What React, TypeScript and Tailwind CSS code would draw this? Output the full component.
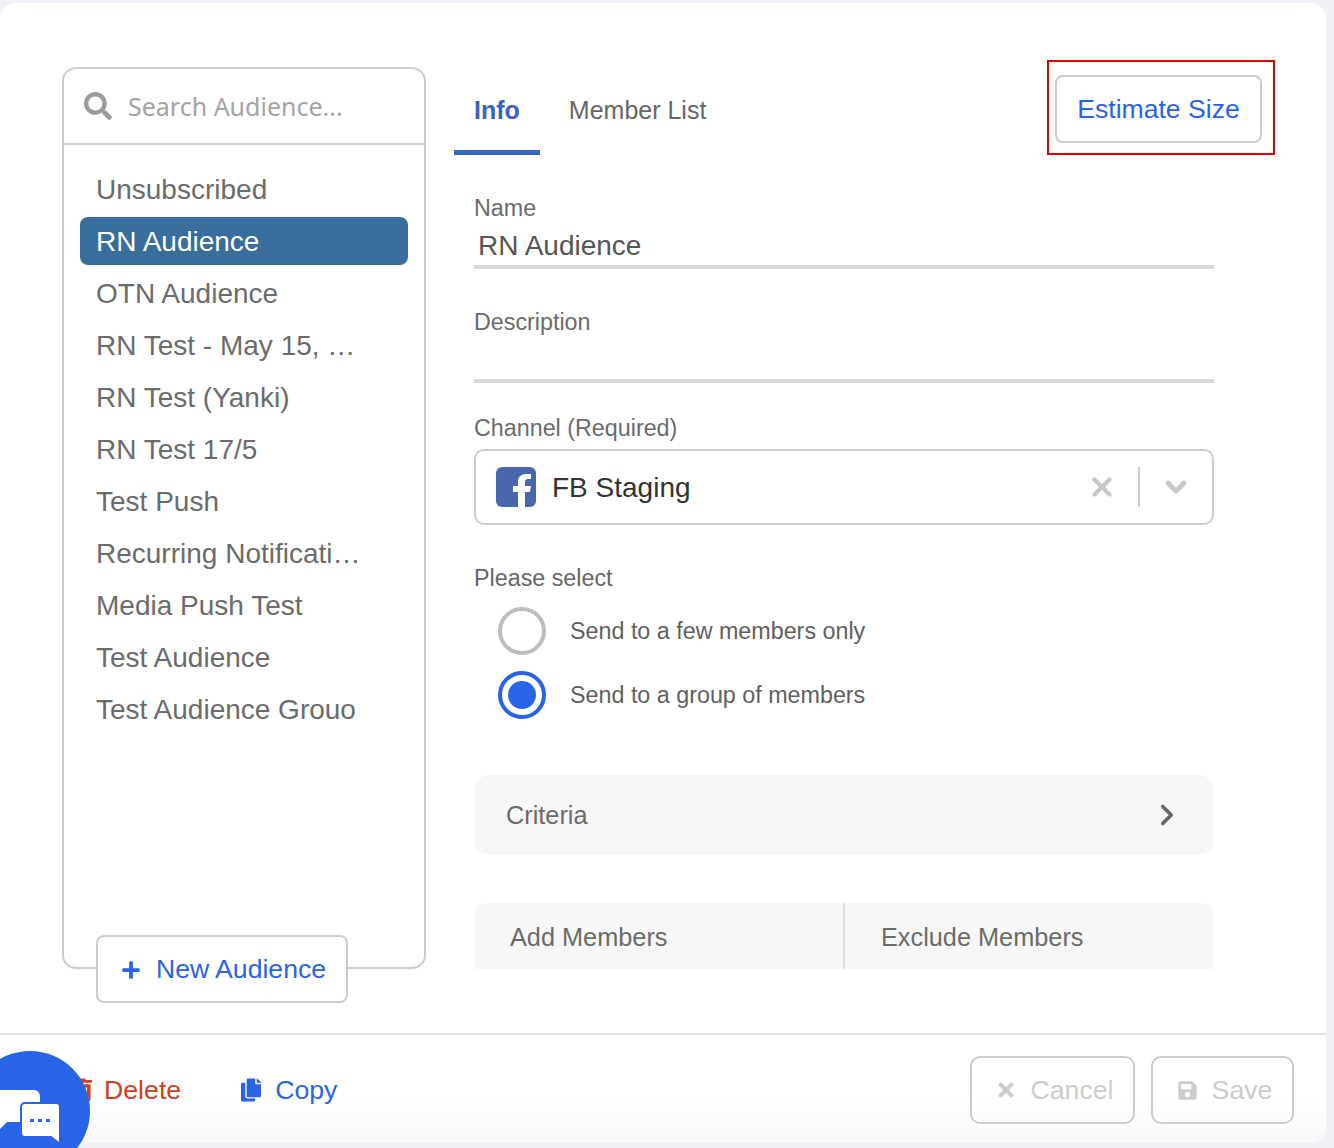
import { FaCopy, FaPlus, FaSave, FaSearch, FaTimes, FaTrashAlt } from "react-icons/fa";
import { ChevronDown, ChevronRight, X } from "lucide-react";

const audiences = [
  "Unsubscribed",
  "RN Audience",
  "OTN Audience",
  "RN Test - May 15, 2019",
  "RN Test (Yanki)",
  "RN Test 17/5",
  "Test Push",
  "Recurring Notification Test",
  "Media Push Test",
  "Test Audience",
  "Test Audience Grouo",
];

const Field = ({ label, value }: { label: string; value?: string }) => (
  <div>
    <div className="h-[30px] text-[23.3px] leading-[30px] text-[#6b6b6b]">{label}</div>
    <div className="h-[46px] border-b-[4px] border-[#d8d8d8] pl-[4px] pt-[5px] text-[28px] leading-[36px] text-[#555]">{value}</div>
  </div>
);

const Radio = ({ checked, label }: { checked?: boolean; label: string }) => (
  <div className="flex h-[48px] items-center gap-[24px] pl-[24px]">
    <div
      className={`flex h-[48px] w-[48px] items-center justify-center rounded-full border-[4px] ${
        checked ? "border-[#2964e6]" : "border-[#bdbdbd]"
      }`}
    >
      {checked && <div className="h-[28px] w-[28px] rounded-full bg-[#2964e6]" />}
    </div>
    <span className="text-[23.3px] text-[#5f5f5f]">{label}</span>
  </div>
);

export default function App() {
  return (
    <div className="relative h-[1148px] w-[1334px] overflow-hidden bg-[#f0f1f7] pt-[3px] font-['Liberation_Sans',sans-serif]">
      <div className="flex h-[1140px] w-[1326px] flex-col rounded-[16px] bg-white">
        <div className="flex h-[1030px] pl-[62px] pt-[64px]">
          {/* Audience list */}
          <div className="relative h-[902px] w-[364px] rounded-[14px] border-[2px] border-[#cccccc]">
            <div className="flex h-[76px] items-center border-b-[2px] border-[#cccccc] pl-[20px]">
              <FaSearch className="h-[28px] w-[28px] text-[#9b9b9b]" />
              <span className="ml-[16px] pt-[2px] font-['Noto_Sans',sans-serif] text-[25px] text-[#a3a3a3]">Search Audience...</span>
            </div>
            <div className="px-[16px] pt-[20px]">
              {audiences.map((name, i) => (
                <div
                  key={name}
                  className={`mb-[4px] h-[48px] rounded-[8px] pl-[16px] pr-[46px] text-[28px] leading-[50px] ${
                    i === 1 ? "bg-[#386d9c] text-white" : "text-[#6b6b6b]"
                  }`}
                >
                  <div className="truncate">{name}</div>
                </div>
              ))}
            </div>
            <div className="absolute bottom-[-36px] left-[32px] flex h-[68px] w-[252px] items-center rounded-[8px] border-[2px] border-[#cccccc] bg-white pl-[23px] pt-[2px] text-[26.6px] text-[#2964e6]">
              <FaPlus className="h-[20px] w-[20px]" />
              <span className="ml-[15px]">New Audience</span>
            </div>
          </div>

          {/* Detail */}
          <div className="ml-[28px] w-[821px]">
            <div className="flex h-[91px] items-start justify-between">
              <div className="flex h-[88px] items-end">
                <div className="flex h-[88px] items-center border-b-[5px] border-[#3a62c4] px-[20px] pt-[4px] text-[25px] font-bold text-[#3a62c4]">
                  Info
                </div>
                <div className="ml-[9px] flex h-[88px] items-center px-[20px] text-[25px] text-[#666]">Member List</div>
              </div>
              <div className="mt-[-7px] border-[2px] border-[#e00000] pb-[10px] pl-[6px] pr-[11px] pt-[13px]">
                <div className="flex h-[68px] w-[207px] items-center justify-center rounded-[8px] border-[2px] border-[#cccccc] pt-[2px] text-[26.6px] text-[#2964e6]">
                  Estimate Size
                </div>
              </div>
            </div>
            <div className="ml-[20px] mt-[35px] w-[740px]">
              <Field label="Name" value="RN Audience" />
              <div className="mt-[38px]">
                <Field label="Description" />
              </div>
              <div className="mt-[30px] h-[30px] text-[23.3px] leading-[30px] text-[#6b6b6b]">Channel (Required)</div>
              <div className="mt-[6px] flex h-[76px] items-center rounded-[10px] border-[2px] border-[#cccccc] pl-[20px]">
                <svg viewBox="0 0 40 40" className="h-[40px] w-[40px]">
                  <rect width="40" height="40" rx="6" fill="#4a66ad" />
                  <path d="M29 40V25h5l1-6h-6v-4c0-2 1-3 3-3h3V7h-5c-5 0-8 3-8 8v4h-5v6h5v15z" fill="#fff" />
                </svg>
                <span className="ml-[16px] pt-[2px] text-[28px] text-[#333]">FB Staging</span>
                <X className="ml-auto h-[30px] w-[30px] text-[#c8c8c8]" strokeWidth={3.5} />
                <div className="ml-[21px] h-[40px] w-[2px] bg-[#cccccc]" />
                <ChevronDown className="ml-[20px] mr-[20px] h-[32px] w-[32px] text-[#c8c8c8]" strokeWidth={3.5} />
              </div>
              <div className="mt-[38px] h-[30px] text-[23.3px] leading-[30px] text-[#666]">Please select</div>
              <div className="mt-[14px] flex flex-col gap-[16px]">
                <Radio label="Send to a few members only" />
                <Radio checked label="Send to a group of members" />
              </div>
              <div className="mt-[56px] flex h-[80px] items-center rounded-[16px] bg-[#f7f7f7] pl-[32px] pr-[30px] text-[25.3px] text-[#6b6b6b]">
                <span className="pt-[2px]">Criteria</span>
                <ChevronRight className="ml-auto h-[34px] w-[34px] text-[#666]" strokeWidth={2.5} />
              </div>
              <div className="mt-[48px] flex h-[66px] rounded-t-[12px] bg-[#f7f7f7] text-[25.3px] text-[#6b6b6b]">
                <div className="flex w-[371px] items-center border-r-[2px] border-[#dddddd] pl-[36px] pt-[3px]">Add Members</div>
                <div className="flex flex-1 items-center pl-[36px] pt-[3px]">Exclude Members</div>
              </div>
            </div>
          </div>
        </div>

        {/* Footer */}
        <div className="flex h-[110px] items-center rounded-b-[16px] border-t-[2px] border-[#e6e6e6] bg-gradient-to-b from-white from-60% to-[#f8f8f8] pl-[72px] pr-[32px] pt-[2px]">
          <FaTrashAlt className="h-[24px] w-[20px] text-[#cc4125]" />
          <span className="ml-[12px] text-[26.7px] text-[#cc4125]">Delete</span>
          <FaCopy className="ml-[60px] h-[24px] w-[20px] text-[#2964e6]" />
          <span className="ml-[14px] text-[26.7px] text-[#2964e6]">Copy</span>
          <div className="ml-auto flex h-[68px] w-[165px] items-center justify-center rounded-[10px] border-[2px] border-[#cccccc] pl-[4px] text-[26.7px] text-[#cccccc]">
            <FaTimes className="h-[22px] w-[22px]" />
            <span className="ml-[13px]">Cancel</span>
          </div>
          <div className="ml-[16px] flex h-[68px] w-[143px] items-center justify-center rounded-[10px] border-[2px] border-[#cccccc] pl-[4px] text-[26.7px] text-[#cccccc]">
            <FaSave className="h-[21px] w-[21px]" />
            <span className="ml-[14px]">Save</span>
          </div>
        </div>
      </div>

      {/* Chat launcher */}
      <div className="absolute left-[-30px] top-[1051px] h-[120px] w-[120px] rounded-full bg-[#2964e6]">
        <svg viewBox="0 0 120 120" className="h-[120px] w-[120px]">
          <path d="M15 39h49a6 6 0 0 1 6 6v26H37l-8 8v-8H15z" fill="#fff" />
          <path d="M55 52h31a4 4 0 0 1 4 4v37l-9-7H55a4 4 0 0 1-4-4V56a4 4 0 0 1 4-4z" fill="#fff" stroke="#2964e6" strokeWidth="2" />
          <rect x="60" y="68" width="4" height="3" fill="#2964e6" />
          <rect x="68" y="68" width="4" height="3" fill="#2964e6" />
          <rect x="76" y="68" width="4" height="3" fill="#2964e6" />
        </svg>
      </div>
    </div>
  );
}
